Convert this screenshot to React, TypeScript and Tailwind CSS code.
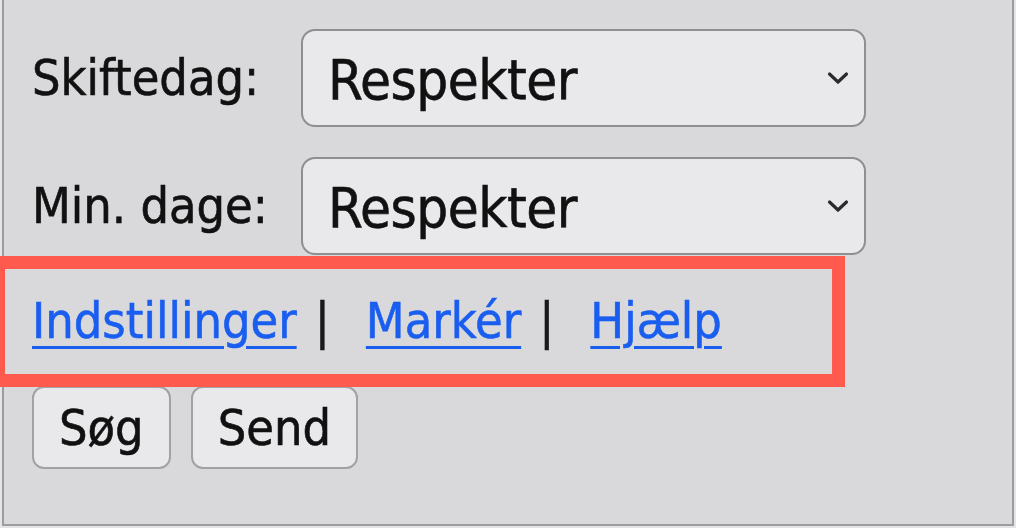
import React from "react";

const font = "font-['DejaVu_Sans_Condensed','DejaVu_Sans',sans-serif] [-webkit-text-stroke:0.6px]";

function Chevron() {
  return (
    <svg width="22" height="14" viewBox="0 0 22 14" className="shrink-0">
      <polyline points="2.5,3 11,11 19.5,3" fill="none" stroke="#2b2b2e" strokeWidth="3.2" strokeLinecap="round" strokeLinejoin="round" />
    </svg>
  );
}

function SelectRow({ label, className = "" }: { label: string; className?: string }) {
  return (
    <div className={`flex items-center h-[98px] ${className}`}>
      <span className="w-[269px] text-[50px] leading-none text-[#111]">{label}</span>
      <div className="w-[565px] h-[98px] rounded-[14px] border-2 border-[#8e8e93] bg-[#e9e9ec] pl-[25px] pr-[15px] flex items-center justify-between">
        <span className="text-[56px] leading-none tracking-[-0.5px] text-[#111] pt-[4px]">Respekter</span>
        <Chevron />
      </div>
    </div>
  );
}

export default function App() {
  const link = "text-[#1a5ef0] underline decoration-[3px] underline-offset-[8px]";
  return (
    <div className={`relative w-[1016px] h-[528px] overflow-hidden bg-[#e4e4e6] ${font}`}>
      <div className="ml-[2px] w-[1012px] h-[526px] border-x-2 border-b-2 border-[#9c9c9f] bg-[#d9d9dc] pl-[28px] pt-[29px] flex flex-col">
        <SelectRow label="Skiftedag:" />
        <SelectRow label="Min. dage:" className="mt-[30px]" />
        <div className="h-[131px] flex items-center text-[50px] leading-none">
          <a href="#" className={link}>Indstillinger</a>
          <span className="ml-[18px] text-[#1a1a1a]">|</span>
          <a href="#" className={`ml-[36px] ${link}`}>Markér</a>
          <span className="ml-[18px] text-[#1a1a1a]">|</span>
          <a href="#" className={`ml-[36px] ${link}`}>Hjælp</a>
        </div>
        <div className="flex gap-[20px]">
          <button className="h-[83px] rounded-[12px] border-2 border-[#a2a2a6] bg-[#e9e9ec] px-[25px] text-[50px] leading-none text-[#111]">Søg</button>
          <button className="h-[83px] rounded-[12px] border-2 border-[#a2a2a6] bg-[#e9e9ec] px-[25px] text-[50px] leading-none text-[#111]">Send</button>
        </div>
      </div>
      <div className="absolute left-[-8px] top-[256px] w-[853px] h-[131px] border-[13px] border-[#ff5a4e] pointer-events-none" />
    </div>
  );
}
